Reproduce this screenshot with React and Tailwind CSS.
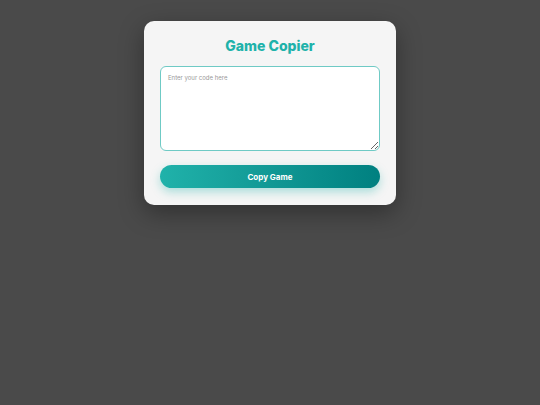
export default function App() {
  return (
    <div className="min-h-screen w-full bg-[#4a4a4a] pt-[21px]" style={{ fontFamily: "Inter, 'Noto Sans', sans-serif" }}>
      <div className="mx-auto flex w-[252px] flex-col rounded-[10px] bg-[#f5f5f5] px-4 pt-[15px] pb-[17px] shadow-[0_8px_24px_rgba(0,0,0,0.35)]">
        <h1 className="text-center text-[14px] leading-5 font-extrabold text-[#20b2aa]">Game Copier</h1>
        <textarea
          placeholder="Enter your code here"
          className="mt-[10px] h-[85px] w-full resize-y rounded-[6px] border border-[#6fcac5] bg-white px-[7px] py-[6px] text-[6px] text-gray-700 placeholder:text-[#9a9a9a] outline-none"
        />
        <button className="mt-[14px] h-[23px] w-full rounded-full bg-gradient-to-r from-[#20b2aa] to-[#008080] text-[8px] font-bold text-white shadow-[0_4px_10px_rgba(32,178,170,0.35)]">
          Copy Game
        </button>
      </div>
    </div>
  )
}
